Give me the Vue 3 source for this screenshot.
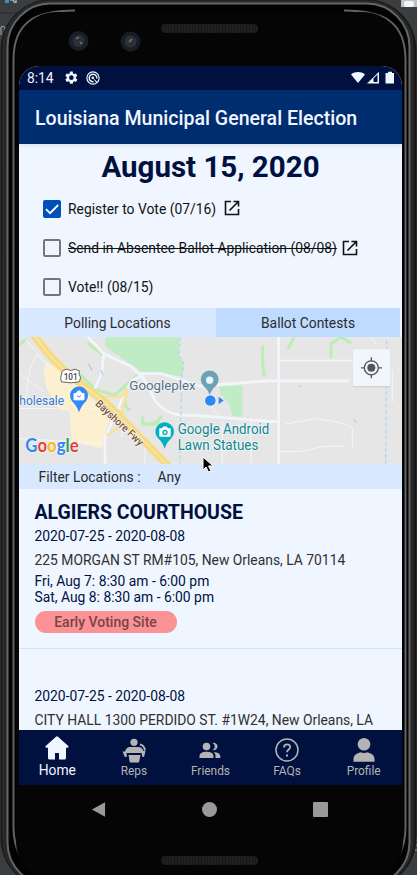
<script setup>
const tasks = [
  { label: 'Register to Vote (07/16)', done: true, link: true },
  { label: 'Send in Absentee Ballot Application (08/08)', struck: true, link: true },
  { label: 'Vote!! (08/15)' },
]
const tabs = ['Polling Locations', 'Ballot Contests']
const nav = ['Home', 'Reps', 'Friends', 'FAQs', 'Profile']
</script>

<template>
  <div class="device">
    <svg class="frame" viewBox="0 0 417 875" aria-hidden="true">
      <defs>
        <pattern id="mesh" width="3" height="2" patternUnits="userSpaceOnUse">
          <rect width="3" height="2" fill="#202020" /><rect width="1" height="1" fill="#101010" />
        </pattern>
      </defs>
      <rect width="417" height="875" fill="#3b3e40" />
      <path d="M0 13H30" stroke="#292b2d" />
      <path d="M5 0h4v3h-4z" fill="#3890bd" /><path d="M10 0h3l2 3M16 0v3" stroke="#aaa" stroke-width="1.5" fill="none" />
      <path d="M1 35v-8q3-2 4 1v7" stroke="#aaa" fill="none" />
      <path d="M401 0h16v7h-16z" fill="#bfc3c4" /><rect x="404" y="1" width="10" height="6" rx="2" fill="#edf5fd" />
      <path d="M413 840h4M412 845h5M412 850h5" stroke="#999" />
      <rect x=".5" y="-1" width="416" height="890" rx="51" fill="#191919" />
      <rect x="3" y="1" width="410" height="886" rx="47" fill="#262626" stroke="#303030" />
      <rect x="7.5" y="3.5" width="402" height="882" rx="43" fill="#050505" stroke="#666" stroke-width="2" />
      <rect x="9.5" y="5.5" width="398" height="878" rx="42" fill="#020202" />
      <path d="M75 10.5C35 10.5 13.5 22 13.5 60V827C13.5 848 22 865 36 875" fill="none" stroke="#626268" stroke-width="2" />
      <path d="M344 10.5C384 10.5 405.5 22 405.5 60V827C405.5 848 397 866 381 875" fill="none" stroke="#626268" stroke-width="2" />
      <rect x="16" y="12" width="387" height="870" rx="40" fill="#050505" />
      <rect x="161" y="24" width="97" height="9" rx="4.5" fill="url(#mesh)" />
      <rect x="161" y="856" width="97" height="9" rx="4.5" fill="url(#mesh)" />
      <g fill="#171d29"><circle cx="78.5" cy="41" r="10" /><circle cx="130.5" cy="41.5" r="10" /></g>
      <g fill="#303033"><circle cx="78.5" cy="41" r="6" /><circle cx="130.5" cy="41.5" r="6" /></g>
      <path d="M76 39l3-2M80 42l2 2M129 42l3-3" stroke="#777" stroke-width="1.5" />
    </svg>

    <div class="screen">
      <div class="status">
        <span>8:14</span>
        <svg class="gear" viewBox="2.500 2.500 20 20"><path d="M19.4 13a7 7 0 000-2l2.1-1.6-2-3.5-2.5 1a8 8 0 00-1.7-1L15 3.3h-4l-.4 2.6a8 8 0 00-1.7 1l-2.5-1-2 3.5L6.5 11a7 7 0 000 2l-2.1 1.6 2 3.5 2.5-1a8 8 0 001.7 1l.4 2.6h4l.4-2.6a8 8 0 001.7-1l2.5 1 2-3.5zM13 15.3a3.3 3.3 0 110-6.6 3.3 3.3 0 010 6.6z" /></svg>
        <svg class="debug" viewBox="0 0 14 14"><circle cx="7" cy="7" r="6.100" fill="none" stroke="currentColor" stroke-width="1.200" /><path d="M10.800 7.500A3.800 3.800 0 107.500 10.800" fill="none" stroke="currentColor" stroke-width="1.500" /><path d="M6.200 6.200l5 4.500-1 1z" /><circle cx="6.800" cy="6.800" r="1.300" /></svg>
        <svg class="signals" viewBox="0 0 44 14"><path d="M1 3.500C5 .3 11 .3 15 3.500L8 12z" /><path d="M17 12.500L29 .7v11.800z" /><path d="M23.500 7.500l4-4v7.500h-4z" fill="#00103f" /><path d="M35.500 2H38V.7h4V2h2v10.500h-8.500z" /></svg>
      </div>
      <header><span class="apptitle">Louisiana Municipal General Election</span></header>

      <main>
        <h1>August 15, 2020</h1>
        <ul class="tasks">
          <li v-for="t in tasks" :key="t.label">
            <i class="box" :class="{ on: t.done }">
              <svg v-if="t.done" viewBox="0 0 18 18"><path d="M3 9.200l4 4L15.200 5" /></svg>
            </i>
            <span :class="{ struck: t.struck }">{{ t.label }}</span>
            <svg v-if="t.link" class="open" viewBox="0 0 16 16"><path d="M7 1.500H1.500v13h13V9M9.500 1.500h5v5M14 2L5.500 10.500" /></svg>
          </li>
        </ul>

        <div class="tabs"><div v-for="(t, i) in tabs" :key="t" :class="'tab' + i">{{ t }}</div></div>

        <svg class="map" viewBox="57 111 1149 380">
          <rect x="57" y="111" width="1149" height="380" fill="#e6e6e6" />
          <path d="M316 111H536V165L552 190L545 228L440 217L418 210L316 138z" fill="#bfebc5" />
          <path d="M658 259L727 255V350L697 348L690 315L660 280z" fill="#bfebc5" />
          <path d="M141 185L195 220L245 262L280 300L330 350L305 445L215 425L208 330L175 328L140 265L130 210z" fill="#fcf0d1" />
          <g fill="none" stroke="#bdedb5" stroke-width="9">
            <path d="M262 128L309 164M230 215L290 270L345 285L400 235L425 215M380 260Q365 330 392 328M57 135L80 114" />
            <path d="M428 350v22h40l16-25M435 375l35-10 18 15M788 137v55l5 38M882 111l-18 35M993 175v-45l30-19 30 17" />
          </g>
          <g fill="none" stroke="#f2f6fc" stroke-width="3">
            <path d="M72 111l70 85-30-35-22 45-14 94M57 220l75 55M57 415l250 15M225 325h150M365 409v-60M435 438v53M57 325h110M660 350l-25-30M667 360v131M753 360v131" />
            <path d="M837 455l75-2 60-15h60M1057 440v-60l-50-15-55-10-95 16M1177 210v95M837 140l-5-29M1110 111l20 20" />
          </g>
          <g fill="none" stroke="#f2f6fc" stroke-width="8">
            <path d="M265 111L310 160L395 200L430 235L465 300Q500 350 575 345L830 365" />
            <path d="M285 265L305 220L311 165M430 225L395 240L370 290L340 355L315 415V491M415 220L485 220L600 258L800 242H1047" />
            <path d="M836 111V491" /><path d="M832 181H1080" stroke-width="5" />
          </g>
          <path d="M541 111l-5 54 16 25-7 40-5 261M1160 120l-3 371" fill="none" stroke="#a9d1f4" stroke-width="3" stroke-dasharray="12 7" />
          <path d="M265 190l12 22M303 210l6 15M1062 358l8 10M898 258h5" stroke="#8dc6fa" stroke-width="3" />
          <path d="M300 290h65l18-25-15 55q5 35-18 65l-30 20M325 300q-15 30 20 45" fill="none" stroke="#fae196" stroke-width="7" />
          <g fill="none"><path d="M101 105Q170 200 250 257T360 350L505 497" stroke="#f6db82" stroke-width="23" /><path d="M101 105Q170 200 250 257T360 350L505 497" stroke="#fff1be" stroke-width="3" /></g>
          <path d="M187 212l12-5 13 4 13-4 13 5q-4 10 4 20l-4 13-25 3-29-3-2-13z" fill="#fff" stroke="#666" stroke-width="3" />
          <text x="212" y="241" font-size="26" text-anchor="middle" fill="#444" font-weight="500" textLength="42" lengthAdjust="spacingAndGlyphs">101</text>
          <g class="label">
            <text x="58" y="314" fill="#3a78c2" textLength="134" lengthAdjust="spacingAndGlyphs" font-size="39">holesale</text>
            <text x="388" y="270" fill="#58707e" textLength="199" lengthAdjust="spacingAndGlyphs" font-size="40">Googleplex</text>
            <text x="533" y="402" fill="#11878b" textLength="275" lengthAdjust="spacingAndGlyphs" font-size="42">Google Android</text>
            <text x="533" y="450" fill="#11878b" textLength="242" lengthAdjust="spacingAndGlyphs" font-size="42">Lawn Statues</text>
            <text transform="translate(284 313) rotate(43)" fill="#80552b" textLength="184" lengthAdjust="spacingAndGlyphs" font-size="32" font-weight="500">Bayshore Fwy</text>
          </g>
          <path d="M237 336q-8-22-21-33a27 27 0 1142 0q-13 11-21 33z" fill="#3289fd" /><path d="M222 280h30v19h-30zM230 282v-5q7-10 14 0v5" fill="#fff" stroke="#fff" stroke-width="3" /><path d="M231 286q6 9 12 0" fill="none" stroke="#3289fd" stroke-width="3" />
          <path d="M494 446q-7-22-20-32a28 28 0 1140 0q-13 10-20 32z" fill="#03afc0" /><path d="M478 384h8l4-5h10l4 5h8v26h-34z" fill="#fff" /><circle cx="495" cy="397" r="6" fill="none" stroke="#03afc0" stroke-width="4" />
          <path d="M629 285q-5-17-18-27a27 27 0 1136 0q-13 10-18 27z" fill="#6ba3b4" /><circle cx="629" cy="240" r="11" fill="#e8f3fc" />
          <circle cx="631" cy="301" r="18" fill="#fff" /><circle cx="631" cy="301" r="16" fill="#2f87f5" /><path d="M656 290l15 11-15 11z" fill="#2f87f5" />
          <text x="76" y="457" class="google" font-size="54" textLength="160" lengthAdjust="spacingAndGlyphs"><tspan fill="#3186f5">G</tspan><tspan fill="#ea4032">o</tspan><tspan fill="#f8bb14">o</tspan><tspan fill="#3186f5">g</tspan><tspan fill="#24a54d">l</tspan><tspan fill="#ea4032">e</tspan></text>
          <rect x="1058" y="149" width="113" height="112" rx="4" fill="#c6c8ca" /><rect x="1058" y="147" width="113" height="111" rx="4" fill="#f1f6fc" />
          <g stroke="#555" stroke-width="4" fill="none"><circle cx="1114" cy="203" r="21" /><path d="M1114 171v12M1114 223v11M1083 203h11M1134 203h12" /></g><circle cx="1114" cy="203" r="12" fill="#555" />
        </svg>

        <div class="filter"><span>Filter Locations :</span><span>Any</span></div>

        <article>
          <h2>ALGIERS COURTHOUSE</h2>
          <p class="dates">2020-07-25 - 2020-08-08</p>
          <p class="addr">225 MORGAN ST RM#105, New Orleans, LA 70114</p>
          <p class="hours">Fri, Aug 7: 8:30 am - 6:00 pm<br>Sat, Aug 8: 8:30 am - 6:00 pm</p>
          <span class="pill">Early Voting Site</span>
        </article>
        <article class="second">
          <p class="dates">2020-07-25 - 2020-08-08</p>
          <p class="addr">CITY HALL 1300 PERDIDO ST. #1W24, New Orleans, LA</p>
        </article>
      </main>

      <nav>
        <a v-for="(n, i) in nav" :key="n" :class="{ active: i === 0 }">
          <svg viewBox="0 0 24 24">
            <path v-if="i === 0" d="M11 .8q1-1 2 0L23.300 10q1 1.500-.8 1.800H21V22q0 1.500-1.500 1.500H14V17h-4v6.500H4.500Q3 23.500 3 22V11.800H1.500Q-.3 11.500.7 10z" />
            <g v-else-if="i === 1"><circle cx="12" cy="4.300" r="3.600" /><path d="M6.500 17H18.500L17.300 23.500q-.2 1-1.200 1H8.800q-1 0-1.200-1z" /><path d="M7.500 9h9q3.500 0 5 4h2l-1.500 6h-1.500l-1-4H4.500l.3 4H2.800L.5 13.500H3Q4.500 9 7.500 9z" /><path d="M18 6.500q4 .5 5 6" fill="none" stroke="currentColor" stroke-width="1.800" /></g>
            <g v-else-if="i === 2"><circle cx="8.500" cy="8.500" r="3.800" /><path d="M1.500 20v-2c0-3 3.500-4.300 7-4.300s7 1.300 7 4.300v2zM14.500 12.100a4 4 0 000-7.200 3.800 3.800 0 110 7.200zM17.500 20v-2c0-2-.8-3.200-2-4.100 3.800.3 6.800 1.600 6.800 4.100v2z" /></g>
            <g v-else-if="i === 3" fill="none" stroke="currentColor"><circle cx="12" cy="12" r="11" stroke-width="1.500" /><path d="M9 9.500c0-4 6.200-4 6.200-.4 0 2.400-3.200 2.400-3.200 5.200" stroke-width="1.800" /><path d="M12 16.500v2" stroke-width="2" /></g>
            <g v-else><circle cx="12" cy="6.300" r="6.300" /><path d="M1.500 23.800v-3q0-4 5-5.800l2-.7q3.500 1.500 7 0l2 .7q5 1.800 5 5.800v3z" /></g>
          </svg>
          <span>{{ n }}</span>
        </a>
      </nav>
    </div>

    <div class="system">
      <svg viewBox="0 0 14 16"><path d="M0 8L14 .3v15.400z" /></svg>
      <svg viewBox="0 0 14 14"><circle cx="7" cy="7" r="7" /></svg>
      <svg viewBox="0 0 15 15"><rect width="15" height="15" rx="1" /></svg>
    </div>
    <svg class="cursor" viewBox="0 0 12 18"><path d="M1 1v13l3-3 2.500 5 2.400-1.200L6.500 10H11z" /></svg>
  </div>
</template>

<style>
body { overflow: hidden; background: #050505; }
</style>
<style scoped>
* { box-sizing: border-box; }
.device { position: relative; width: 417px; height: 875px; padding: 66px 15px 0 19px; overflow: hidden; font-family: Roboto, sans-serif; font-size: 13.86px; color: #00103f; }
.frame { position: absolute; inset: 0; width: 417px; height: 875px; }
.screen { position: relative; display: flex; flex-direction: column; width: 383px; height: 719px; border-radius: 20px 20px 0 0; overflow: hidden; background: #eff6ff; white-space: nowrap; }
.status { display: flex; align-items: center; height: 24px; flex: none; background: #00103f; color: #eff6ff; padding: 0 8px; font-size: 13.8px; }
.status svg { fill: currentColor; }
.gear { width: 14px; height: 14px; margin-left: 10px; }
.debug { width: 14px; height: 14px; margin-left: 8px; }
.signals { width: 44px; height: 14px; margin-left: auto; }
header { display: flex; align-items: center; flex: none; height: 54px; padding: 2px 16px 0; background: #002c70; color: #eff6ff; font-size: 19.57px; font-weight: 500; }
main { height: 586px; flex: none; overflow: hidden; box-shadow: inset 0 5px 4px -3px #dbe5f3; }
h1 { margin: 0; height: 45px; line-height: 47px; text-align: center; font-size: 29.5px; font-weight: 700; }
.tasks { list-style: none; margin: 0; padding: 0 24px; height: 119px; color: #111; }
.tasks li { display: flex; align-items: center; height: 39px; }
.box { display: flex; width: 18px; height: 18px; margin-right: 7px; border: 2px solid #72767e; border-radius: 2px; }
.box.on { border: 0; background: #0050bc; }
.box path { fill: none; stroke: #fff; stroke-width: 1.8; }
.struck { text-decoration: line-through; text-decoration-thickness: 1px; }
.open { width: 16px; height: 16px; margin: -1px 0 0 8px; }
.struck + .open { margin: 0 0 0 5px; }
.open path { fill: none; stroke: #111; stroke-width: 1.6; }
.tabs { display: flex; height: 29px; padding-right: 2px; color: #2b2c2e; line-height: 30px; text-align: center; }
.tab0 { width: 197px; background: #d8e8ff; }
.tab1 { flex: 1; background: #bfdbff; }
.map { display: block; width: 383px; height: 127px; }
.label text { paint-order: stroke; stroke: #f2f6fc; stroke-width: 5px; stroke-linejoin: round; }
.google { font-family: Lato, sans-serif; font-weight: 700; paint-order: stroke; stroke: #f5f7fa; stroke-width: 4px; }
.filter { display: flex; gap: 17px; height: 25px; line-height: 26px; padding-left: 19.5px; background: #d8e8ff; color: #2b2c2e; }
article { height: 160px; padding: 13px 15.5px 0; border-bottom: 1px solid #d0e3fb; }
h2 { margin: 0; height: 24px; font-size: 19.5px; line-height: 22px; font-weight: 700; }
p { margin: 0; height: 24px; line-height: 20px; }
.addr { color: #303030; height: 23px; }
.hours { height: 38px; line-height: 16px; }
.pill { display: block; width: 142px; height: 22px; line-height: 23px; border-radius: 11px; background: #fb9295; color: #7b4346; text-align: center; font-weight: 500; font-size: 14px; }
.second { padding-top: 37px; border: 0; }
nav { display: flex; height: 55px; flex: none; background: #00103f; color: #b4b4b4; }
nav a { flex: 1; display: flex; flex-direction: column; align-items: center; padding-top: 8px; font-size: 11.9px; }
nav svg { width: 24px; height: 24px; flex: none; fill: currentColor; overflow: visible; }
nav span { line-height: 16px; margin-top: 1px; }
nav .active { color: #eff6ff; font-size: 13.86px; padding-top: 6px; }
nav .active span { margin-top: 2px; }
.system { position: relative; display: flex; justify-content: space-between; align-items: center; height: 48px; padding: 0 74px 0 72px; width: 383px; }
.system svg { width: 15px; height: 15px; fill: #999; }
.cursor { position: absolute; left: 202px; top: 456px; width: 12px; height: 18px; }
.cursor path { fill: #000; stroke: #fff; stroke-width: 1; }
</style>
